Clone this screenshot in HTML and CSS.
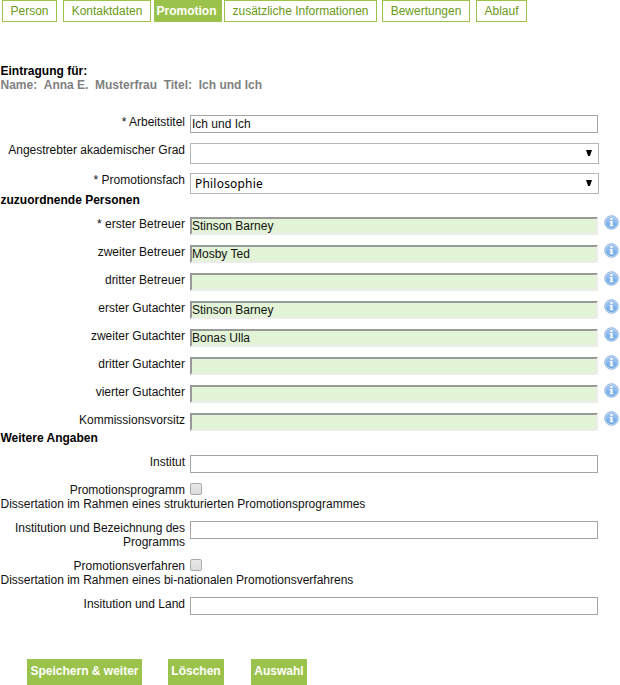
FILE: index.html
```
<!DOCTYPE html>
<html lang="de">
<head>
<meta charset="utf-8">
<title>Promotion</title>
<link rel="stylesheet" href="styles.css">
</head>
<body>
<svg class="defs" width="0" height="0" aria-hidden="true">
  <defs>
    <linearGradient id="blue" x1="0" y1="0" x2="0" y2="1"><stop offset="0" stop-color="#a3c9f1"/><stop offset="1" stop-color="#6aa6e4"/></linearGradient>
    <symbol id="info" viewBox="0 0 15 15">
      <circle cx="7.5" cy="7.5" r="6.8" fill="#cfe1f5" stroke="#86addb" stroke-width=".9"/>
      <circle cx="7.5" cy="7.5" r="5.8" fill="url(#blue)"/>
      <path d="M6.5 3h2v2h-2zM5.7 6h2.8v4h.8v1.3H5.7V10h.8V7.2h-.8z" fill="#fff"/>
    </symbol>
  </defs>
</svg>
<nav class="tabs">
  <a class="tab person">Person</a>
  <a class="tab kontakt">Kontaktdaten</a>
  <a class="tab active">Promotion</a>
  <a class="tab info-tab">zusätzliche Informationen</a>
  <a class="tab bewertung">Bewertungen</a>
  <a class="tab ablauf">Ablauf</a>
</nav>
<header class="entry">
  <h1>Eintragung für:</h1>
  <p><span>Name:</span><span>Anna E.</span><span>Musterfrau</span><span>Titel:</span><span>Ich und Ich</span></p>
</header>
<main>
  <div class="row title-row"><label>* Arbeitstitel</label><div class="input">Ich und Ich</div></div>
  <div class="row select-row"><label>Angestrebter akademischer Grad</label><div class="select"><span></span><i class="arrow"></i></div></div>
  <div class="row select-row"><label>* Promotionsfach</label><div class="select"><span>Philosophie</span><i class="arrow"></i></div></div>
  <h2>zuzuordnende Personen</h2>
  <div class="row"><label>* erster Betreuer</label><div class="input person-input">Stinson Barney</div><svg class="icon"><use href="#info"/></svg></div>
  <div class="row"><label>zweiter Betreuer</label><div class="input person-input">Mosby Ted</div><svg class="icon"><use href="#info"/></svg></div>
  <div class="row"><label>dritter Betreuer</label><div class="input person-input"></div><svg class="icon"><use href="#info"/></svg></div>
  <div class="row"><label>erster Gutachter</label><div class="input person-input">Stinson Barney</div><svg class="icon"><use href="#info"/></svg></div>
  <div class="row"><label>zweiter Gutachter</label><div class="input person-input">Bonas Ulla</div><svg class="icon"><use href="#info"/></svg></div>
  <div class="row"><label>dritter Gutachter</label><div class="input person-input"></div><svg class="icon"><use href="#info"/></svg></div>
  <div class="row"><label>vierter Gutachter</label><div class="input person-input"></div><svg class="icon"><use href="#info"/></svg></div>
  <div class="row"><label>Kommissionsvorsitz</label><div class="input person-input"></div><svg class="icon"><use href="#info"/></svg></div>
  <h2>Weitere Angaben</h2>
  <div class="row"><label>Institut</label><div class="input"></div></div>
  <div class="row check-row"><label>Promotionsprogramm</label><span class="check"></span></div>
  <p class="note">Dissertation im Rahmen eines strukturierten Promotionsprogrammes</p>
  <div class="row"><label>Institution und Bezeichnung des Programms</label><div class="input"></div></div>
  <div class="row check-row"><label>Promotionsverfahren</label><span class="check"></span></div>
  <p class="note">Dissertation im Rahmen eines bi-nationalen Promotionsverfahrens</p>
  <div class="row"><label>Insitution und Land</label><div class="input"></div></div>
</main>
<footer class="actions">
  <button class="save">Speichern &amp; weiter</button>
  <button>Löschen</button>
  <button>Auswahl</button>
</footer>
</body>
</html>
```
FILE: styles.css
```
* { box-sizing: border-box; }
body {
  margin: 0;
  width: 620px;
  height: 685px;
  overflow: hidden;
  background: #fff;
  color: #111;
  font: 12px/14px Arial, "Liberation Sans", sans-serif;
}
h1, h2, p { margin: 0; font-size: 12px; line-height: 14px; }
h1, h2 { color: #000; padding-left: .5px; }
.note { padding-left: .5px; }
.defs { display: block; }
.tabs { display: flex; height: 22px; padding-left: 2px; }
.tab {
  height: 22px;
  border: 1px solid #9bc34b;
  color: #6a9a16;
  line-height: 20px;
  text-align: center;
  white-space: nowrap;
}
.person { width: 55px; margin-right: 6px; }
.kontakt { width: 88px; margin-right: 3px; }
.active { width: 68px; margin-right: 2px; padding-right: 3px; background: #9bc34b; color: #fff; font-weight: bold; }
.info-tab { width: 153px; margin-right: 5px; }
.bewertung { width: 88px; margin-right: 6px; }
.ablauf { width: 51px; }
.entry { margin-top: 42px; }
.entry p { display: flex; gap: 6.6px; padding-left: .5px; color: #7f7f7f; font-weight: bold; }
.row {
  display: grid;
  grid-template-columns: 185px 408px 15px;
  column-gap: 5px;
  align-items: start;
  min-height: 18px;
  margin-top: 10px;
}
.row label { text-align: right; }
.title-row { margin-top: 23px; }
.input {
  height: 18px;
  padding-left: 1px;
  border: 1px solid #a5a5a5;
  line-height: 17px;
}
.person-input {
  padding-left: 0;
  border: 2px solid #ececec;
  border-top-color: #999;
  border-left-color: #999;
  background: #e2f3d6;
  line-height: 15px;
}
.icon { width: 15px; height: 15px; margin: -2px 0 0 1px; }
.select-row { height: 20px; }
.select {
  display: flex;
  justify-content: space-between;
  width: 409px;
  height: 21px;
  padding: 0 6px 0 4px;
  border: 1px solid #b5b5b5;
  font: 12px/20px "Noto Sans", sans-serif;
  letter-spacing: .2px;
  color: #000;
}
.arrow {
  width: 6px;
  height: 6px;
  margin-top: 6px;
  background: #000;
  clip-path: polygon(0 0, 100% 0, 65% 100%, 35% 100%);
}
.check-row { min-height: 14px; height: 14px; }
.check {
  width: 12px;
  height: 12px;
  border: 1px solid #a9a9a9;
  border-radius: 2px;
  background: linear-gradient(#e8e8e8, #dcdcdc);
}
.actions { display: flex; margin: 44px 0 0 27px; }
button {
  width: 56px;
  height: 26px;
  margin-right: 27px;
  padding: 0 0 2px;
  border: 0;
  background: #9bc34b;
  color: #fff;
  font: bold 12px/14px Arial, "Liberation Sans", sans-serif;
  white-space: nowrap;
}
.save { width: 115px; margin-right: 26px; }
```
